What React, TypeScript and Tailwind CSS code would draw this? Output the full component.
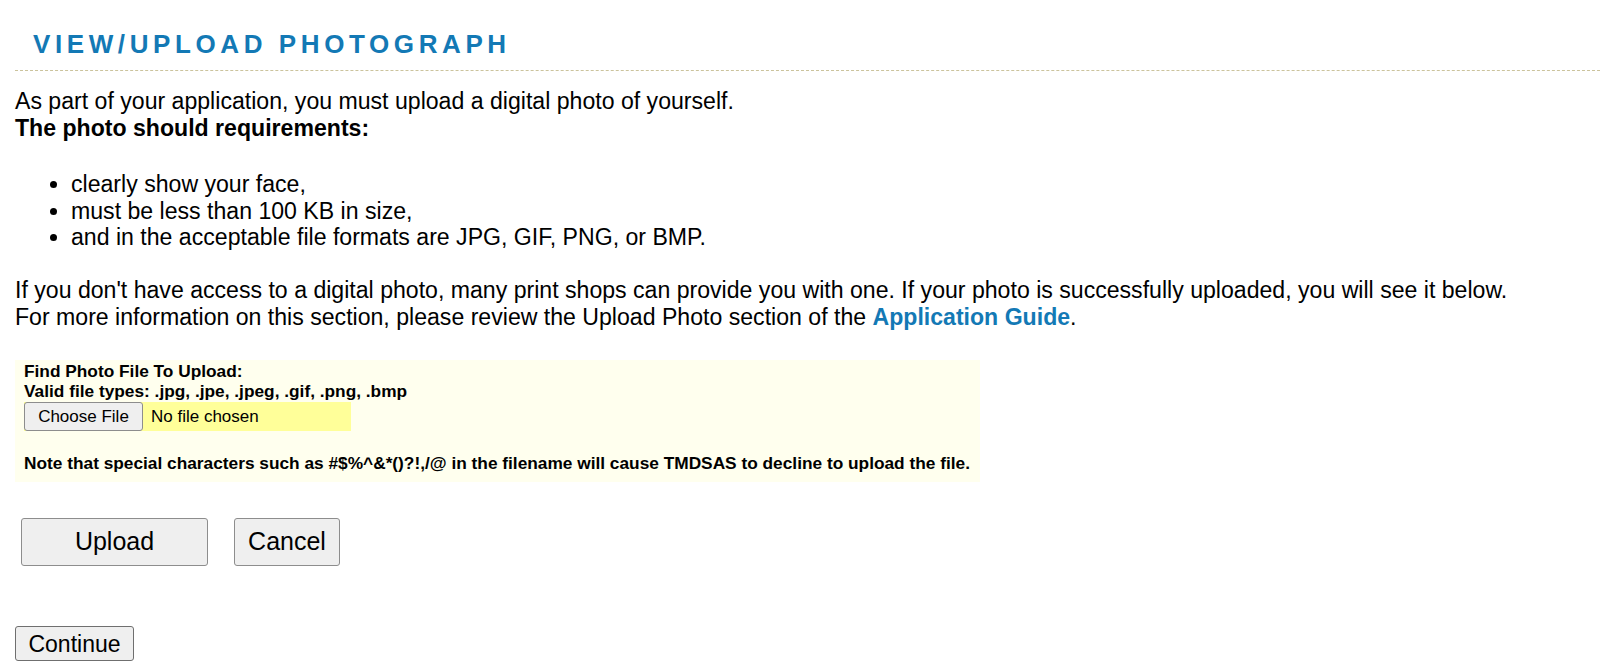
const font = { fontFamily: '"Liberation Sans", Arial, sans-serif' };

const requirements = [
  "clearly show your face,",
  "must be less than 100 KB in size,",
  "and in the acceptable file formats are JPG, GIF, PNG, or BMP.",
];

const PhotoUpload = () => {
  return (
    <div className="pl-[15px] pb-2 bg-white text-black min-h-[670px]" style={font}>
      <div className="pl-[18px] pt-[30px] pb-[11px] border-b border-dashed border-[#cbc39c]">
        <h1 className="text-[26px] leading-[29px] font-bold tracking-[4.6px] text-[#1379b5]">
          VIEW/UPLOAD PHOTOGRAPH
        </h1>
      </div>

      <div className="mt-[17px] text-[23.1px] leading-[26.5px]">
        <p>As part of your application, you must upload a digital photo of yourself.</p>
        <p className="font-bold">The photo should requirements:</p>
      </div>

      <ul className="mt-[30px] pl-[56px] list-disc text-[23.1px] leading-[26.5px]">
        {requirements.map((item) => (
          <li key={item}>{item}</li>
        ))}
      </ul>

      <div className="mt-[26.5px] text-[23.1px] leading-[26.5px]">
        <p>
          If you don't have access to a digital photo, many print shops can provide you with one. If your photo is
          successfully uploaded, you will see it below.
        </p>
        <p>
          For more information on this section, please review the Upload Photo section of the{" "}
          <a href="#" className="font-bold text-[#1379b5]">
            Application Guide
          </a>
          .
        </p>
      </div>

      <div className="mt-[30px] w-[965px] bg-[#ffffee] pl-[9px] pt-[2px] pb-[9px] text-[17.3px] leading-[19.5px]">
        <div className="font-bold">Find Photo File To Upload:</div>
        <div className="font-bold">Valid file types: .jpg, .jpe, .jpeg, .gif, .png, .bmp</div>
        <div className="mt-[1px] flex items-center w-[327px] h-[29px] bg-[#ffff99]">
          <button className="h-[29px] w-[119px] shrink-0 rounded-[3px] border border-[#8d8d8d] bg-[#efefef] text-[17px]">
            Choose File
          </button>
          <span className="ml-[8px] text-[17px]">No file chosen</span>
        </div>
        <div className="mt-[22.5px] font-bold">
          Note that special characters such as #$%^&amp;*()?!,/@ in the filename will cause TMDSAS to decline to upload
          the file.
        </div>
      </div>

      <div className="mt-[36px] ml-[6px] flex gap-[26px]">
        <button className="h-[48px] w-[187px] rounded-[3px] border border-[#8d8d8d] bg-[#efefef] text-[25px]">
          Upload
        </button>
        <button className="h-[48px] w-[106px] rounded-[3px] border border-[#8d8d8d] bg-[#efefef] text-[25px]">
          Cancel
        </button>
      </div>

      <div className="mt-[60px]">
        <button className="h-[35px] w-[119px] rounded-[3px] border border-[#6f6f6f] bg-[#efefef] text-[23px]">
          Continue
        </button>
      </div>
    </div>
  );
};

export default function App() {
  return <PhotoUpload />;
}
